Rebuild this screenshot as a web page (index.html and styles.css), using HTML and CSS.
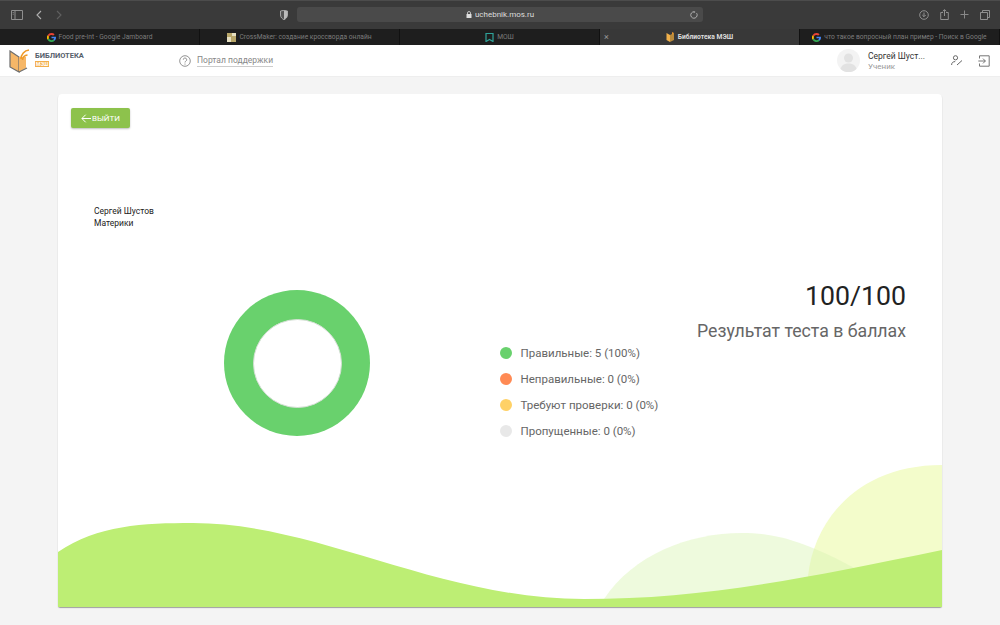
FILE: index.html
```html
<!DOCTYPE html>
<html lang="ru">
  <head>
    <meta charset="UTF-8" />
    <title>Библиотека МЭШ</title>
    <link rel="stylesheet" href="styles.css">
  </head>

  <body>
    <svg class="defs" width="0" height="0">
      <defs>
        <g id="gIcon">
          <path d="M5 0a5 5 0 0 1 3.500 1.400L7 2.900A3 3 0 0 0 2.200 4L.6 2.600A5 5 0 0 1 5 0z" fill="#ea4335"/>
          <path d="M.6 2.600 2.200 4a3 3 0 0 0 0 2L.6 7.400a5 5 0 0 1 0-4.800z" fill="#fbbc05"/>
          <path d="M2.200 6A3 3 0 0 0 7 7.200l1.500 1.300A5 5 0 0 1 .6 7.400z" fill="#34a853"/>
          <path d="M10 5c0 1.400-.5 2.600-1.500 3.500L7 7.200c.5-.4.800-.9.900-1.400H5V4.100h4.900z" fill="#4285f4"/>
        </g>
      </defs>
    </svg>

    <div class="toolbar">
      <div class="toolbarLeft">
        <svg class="tool" width="12" height="10" viewBox="0 0 12 10"><path d="M.5.5h11v9H.5zM4 .5v9M1.700 2.500h1M1.700 4.200h1" fill="none" stroke="#8f8f8f"/></svg>
        <svg class="tool" width="8" height="10" viewBox="0 0 8 10"><path d="M6 1 2 5l4 4" fill="none" stroke="#b0b0b0" stroke-width="1.100"/></svg>
        <svg class="tool" width="8" height="10" viewBox="0 0 8 10"><path d="m2 1 4 4-4 4" fill="none" stroke="#606060" stroke-width="1.100"/></svg>
      </div>
      <svg class="shield" width="8" height="10" viewBox="0 0 8 10"><path d="M.5 1 4 .3 7.500 1v4C7.500 7.500 5.500 9 4 9.700 2.500 9 .5 7.500 .5 5z" fill="#555" stroke="#bbb" stroke-width=".8"/><path d="M4 .5 7.300 1.200V5C7.300 7.300 5.500 8.900 4 9.500z" fill="#bbb"/></svg>
      <div class="address">
        <svg width="6" height="7" viewBox="0 0 6 7"><path d="M.5 3h5v4h-5z" fill="#ddd"/><path d="M1.500 3V2a1.500 1.500 0 0 1 3 0v1" fill="none" stroke="#ddd" stroke-width=".8"/></svg>
        <span>uchebnik.mos.ru</span>
        <svg class="reload" width="8" height="8" viewBox="0 0 8 8"><path d="M6.600 2.200A3.200 3.200 0 1 1 4 .8" fill="none" stroke="#bbb" stroke-width=".9"/><path d="M3.800 0v2L5.500 1z" fill="#bbb"/></svg>
      </div>
      <div class="toolbarRight">
        <svg width="10" height="10" viewBox="0 0 10 10"><circle cx="5" cy="5" r="4.300" fill="none" stroke="#999" stroke-width=".9"/><path d="M5 2.500v4M3.300 5 5 6.700 6.700 5" fill="none" stroke="#999" stroke-width=".9"/></svg>
        <svg width="9" height="11" viewBox="0 0 9 11"><path d="M3 3.500H.7v7h7.600v-7H6M4.500 7V.8M2.800 2.300 4.500.6l1.700 1.700" fill="none" stroke="#999" stroke-width=".9"/></svg>
        <svg width="9" height="9" viewBox="0 0 9 9"><path d="M4.500.5v8M.5 4.500h8" stroke="#888" stroke-width="1"/></svg>
        <svg width="10" height="10" viewBox="0 0 10 10"><path d="M2.500 2.500V.5h7v7h-2M.5 2.500h7v7h-7z" fill="none" stroke="#999" stroke-width=".9"/></svg>
      </div>
    </div>

    <div class="tabs">
      <div class="tab">
        <svg width="9" height="9" viewBox="0 0 10 10"><use href="#gIcon"/></svg>
        <span>Food pre-int - Google Jamboard</span>
      </div>
      <div class="tab">
        <svg width="9" height="9" viewBox="0 0 9 9"><path d="M0 0h9v9H0z" fill="#b9a76a"/><path d="M0 4h4v5H0zM5 0h4v3H5z" fill="#e6dfc0"/></svg>
        <span>CrossMaker: создание кроссворда онлайн</span>
      </div>
      <div class="tab">
        <svg width="9" height="9" viewBox="0 0 9 9"><path d="M1 .5h7v8L4.500 6.500 1 8.500z" fill="none" stroke="#2fa39a" stroke-width="1.200"/></svg>
        <span>МОШ</span>
      </div>
      <div class="tab tabActive">
        <span class="tabClose">×</span>
        <svg width="9" height="10" viewBox="0 0 9 10"><path d="M.5 1 4 3v7L.5 8z" fill="#f0b04a"/><path d="M4 3l4-2v7l-4 2z" fill="#b98a3c"/><path d="M6 0 8 1 6 3z" fill="#e9932c"/></svg>
        <span>Библиотека МЭШ</span>
      </div>
      <div class="tab">
        <svg width="9" height="9" viewBox="0 0 10 10"><use href="#gIcon"/></svg>
        <span>что такое вопросный план пример - Поиск в Google</span>
      </div>
    </div>

    <header class="header">
      <div class="logo">
        <svg width="22" height="25" viewBox="0 0 22 25">
          <path d="M1 3 10 9v15L1 19z" fill="#f6b768" stroke="#6d6d6d" stroke-width="1.200"/>
          <path d="M10 9h7v11l-7 4z" fill="#f6b768"/>
          <path d="M10 24l8-4" stroke="#6d6d6d" stroke-width="1.200"/>
          <path d="M12 11a9 9 0 0 1 8-9M13.500 12a5.500 5.500 0 0 1 5-5" fill="none" stroke="#ef9a27" stroke-width="1.600"/>
        </svg>
        <div class="logoText">
          <span class="logoName">БИБЛИОТЕКА</span>
          <span class="logoBadge">МЭШ</span>
        </div>
      </div>
      <div class="support">
        <svg width="12" height="12" viewBox="0 0 12 12"><circle cx="6" cy="6" r="5.300" fill="none" stroke="#777" stroke-width=".8"/><path d="M4.300 4.700a1.700 1.700 0 1 1 2.500 1.500c-.6.300-.8.600-.8 1.300" fill="none" stroke="#777" stroke-width=".8"/><circle cx="6" cy="9" r=".6" fill="#777"/></svg>
        <a class="supportLink">Портал поддержки</a>
      </div>
      <div class="user">
        <div class="avatar">
          <svg width="23" height="23" viewBox="0 0 23 23"><circle cx="11.500" cy="11.500" r="11.500" fill="#f3f3f3"/><circle cx="11.500" cy="9" r="4.500" fill="#e2e2e2"/><path d="M3.500 20c1-4 4-5.500 8-5.500s7 1.500 8 5.500a11.500 11.500 0 0 1-16 0z" fill="#e2e2e2"/></svg>
        </div>
        <div class="userInfo">
          <span class="userName">Сергей Шуст...</span>
          <span class="userRole">Ученик</span>
        </div>
        <svg class="userEdit" width="12" height="11" viewBox="0 0 12 11"><circle cx="4.500" cy="2.800" r="2.100" fill="none" stroke="#666"/><path d="M.6 10c0-2.500 1.600-3.400 3.600-3.400M6 10l5-4.500" fill="none" stroke="#666"/></svg>
        <svg class="userExit" width="12" height="12" viewBox="0 0 12 12"><path d="M1.500 3.500V.8h9.700v10.400H1.500V8.500M.3 6h7M5 3.600 7.400 6 5 8.400" fill="none" stroke="#666" stroke-width=".9"/></svg>
      </div>
    </header>

    <main class="page">
      <section class="card">
        <svg class="waves" width="884" height="142" viewBox="0 0 884 142">
          <path d="M750 142V111C756 55 800 0 884 0V142Z" fill="#f3fccb"/>
          <path d="M546 134C575 90 630 68 684 68C715 68 745 75 800 105L800 142H546Z" fill="#d9f4b4" opacity=".45"/>
          <path d="M0 87C40 60 85 58 135 58C260 58 380 134 526 134C640 134 740 115 884 85V142H0Z" fill="#bdee74"/>
        </svg>
        <button class="backBtn">
          <svg width="10" height="9" viewBox="0 0 10 9"><path d="M10 4.500H1M4.700.7.900 4.500l3.800 3.800" fill="none" stroke="#fff" stroke-width="1"/></svg>
          ВЫЙТИ
        </button>
        <div class="student">
          <div>Сергей Шустов</div>
          <div>Материки</div>
        </div>
        <div class="result">
          <div class="donut"><div class="donutHole"></div></div>
          <div class="stats">
            <div class="score">100/100</div>
            <div class="scoreLabel">Результат теста в баллах</div>
            <ul class="legend">
              <li><i class="dot green"></i>Правильные: 5 (100%)</li>
              <li><i class="dot orange"></i>Неправильные: 0 (0%)</li>
              <li><i class="dot yellow"></i>Требуют проверки: 0 (0%)</li>
              <li><i class="dot gray"></i>Пропущенные: 0 (0%)</li>
            </ul>
          </div>
        </div>
      </section>
    </main>
  </body>
</html>
```

FILE: styles.css
```css
* {
  box-sizing: border-box;
}

body {
  margin: 0;
  height: 625px;
  overflow: hidden;
  background-color: #f4f4f4;
  font-family: Roboto, "Liberation Sans", sans-serif;
}

.defs {
  position: absolute;
}

.toolbar {
  display: flex;
  align-items: center;
  height: 29px;
  background-color: #3a3a3a;
  box-shadow: inset 0 1px 0 #4c4c4c;
}

.toolbarLeft {
  display: flex;
  align-items: center;
  gap: 12px;
  width: 280px;
  padding-left: 11px;
}

.shield {
  margin-right: 9px;
}

.address {
  position: relative;
  display: flex;
  align-items: center;
  justify-content: center;
  gap: 3px;
  width: 406px;
  height: 15px;
  background-color: #4a4a4a;
  border-radius: 3px;
  color: #ddd;
  font-size: 8px;
}

.reload {
  position: absolute;
  right: 5px;
  top: 4px;
}

.toolbarRight {
  display: flex;
  align-items: center;
  gap: 11px;
  margin-left: 216px;
}

.tabs {
  display: flex;
  height: 16px;
  background-color: #1e1e1e;
}

.tab {
  position: relative;
  display: flex;
  flex: 1;
  align-items: center;
  justify-content: center;
  gap: 3px;
  border-right: 1px solid #111;
  color: #7c7c7c;
  font-size: 6.700px;
  white-space: nowrap;
}

.tabActive {
  background-color: #383838;
  color: #ddd;
  font-weight: 700;
}

.tabClose {
  position: absolute;
  left: 4px;
  top: 3px;
  color: #999;
  font-size: 9px;
  font-weight: 400;
  line-height: 10px;
}

.header {
  display: flex;
  align-items: center;
  height: 32px;
  padding-left: 9px;
  background-color: #fff;
  border-bottom: 1px solid #eee;
}

.logo {
  display: flex;
  align-items: center;
  gap: 4px;
  width: 170px;
}

.logoText {
  display: flex;
  flex-direction: column;
  align-items: flex-start;
  gap: 1px;
  margin-bottom: 3px;
}

.logoName {
  color: #55606b;
  font-size: 7.500px;
  font-weight: 700;
  line-height: 9px;
}

.logoBadge {
  padding: 0 1px;
  background-color: #f3ae4b;
  color: #fff;
  font-size: 5px;
  font-weight: 700;
  line-height: 6px;
}

.support {
  display: flex;
  align-items: center;
  gap: 6px;
}

.supportLink {
  border-bottom: 1px solid #ccc;
  color: #888;
  font-size: 8.500px;
  line-height: 11px;
}

.user {
  display: flex;
  align-items: center;
  margin-left: auto;
  padding-right: 10px;
}

.avatar {
  display: flex;
  margin-right: 8px;
}

.userInfo {
  display: flex;
  flex-direction: column;
  width: 83px;
}

.userName {
  color: #333;
  font-size: 8.500px;
  line-height: 12px;
}

.userRole {
  color: #999;
  font-size: 8px;
  line-height: 10px;
}

.userEdit {
  margin-right: 15px;
}

.page {
  padding: 17px 58px;
}

.card {
  position: relative;
  height: 513px;
  padding: 14px 13px;
  background-color: #fff;
  border-radius: 4px 4px 2px 2px;
  box-shadow: 0 1px 1px rgba(0, 0, 0, 0.35);
}

.waves {
  position: absolute;
  left: 0;
  bottom: 0;
  display: block;
}

.backBtn {
  position: relative;
  display: flex;
  align-items: center;
  justify-content: center;
  gap: 1px;
  width: 59px;
  height: 20px;
  padding: 0;
  background-color: #8dc24c;
  border: 0;
  border-radius: 2px;
  box-shadow: 0 1px 2px rgba(0, 0, 0, 0.25);
  color: #fff;
  font-family: inherit;
  font-size: 8px;
}

.student {
  margin: 77px 0 0 23px;
  color: #222;
  font-size: 8.500px;
  line-height: 12px;
}

.result {
  position: relative;
  display: flex;
  margin-top: 51px;
}

.donut {
  display: flex;
  align-items: center;
  justify-content: center;
  width: 146px;
  height: 146px;
  margin: 10px 0 0 153px;
  background-color: #69d16d;
  border-radius: 50%;
}

.donutHole {
  width: 89px;
  height: 89px;
  background-color: #fff;
  border: 1px solid #d4dfd4;
  border-radius: 50%;
}

.stats {
  flex: 1;
  margin: 0 23px 0 130px;
}

.score {
  color: #222;
  font-size: 26.700px;
  line-height: 33px;
  text-align: right;
}

.scoreLabel {
  margin-top: 6px;
  color: #666;
  font-size: 17.700px;
  line-height: 24px;
  text-align: right;
}

.legend {
  margin: -3px 0 0;
  padding: 0;
  list-style: none;
}

.legend li {
  display: flex;
  align-items: center;
  gap: 8.500px;
  height: 26px;
  color: #666;
  font-size: 11.500px;
}

.dot {
  width: 12px;
  height: 12px;
  border-radius: 50%;
}

.green {
  background-color: #69d16d;
}

.orange {
  background-color: #ff8a54;
}

.yellow {
  background-color: #ffd166;
}

.gray {
  background-color: #e8e8e8;
}
```
